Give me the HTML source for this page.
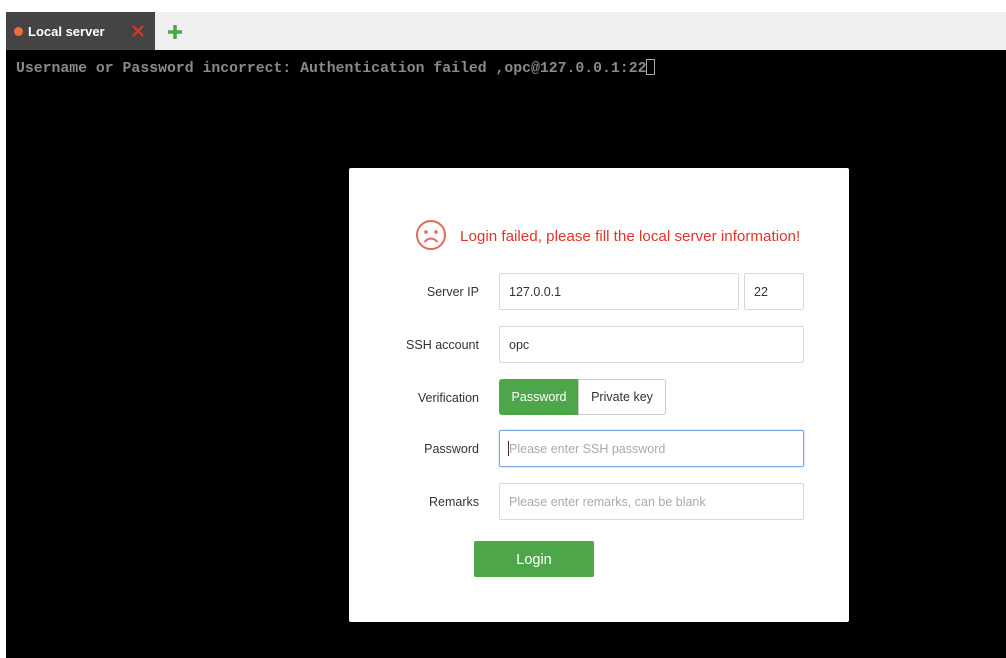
<!DOCTYPE html>
<html><head><style>
*{box-sizing:border-box;margin:0;padding:0}
body{width:1006px;height:658px;background:#fff;position:relative;overflow:hidden;font-family:"Liberation Sans",sans-serif}
.bar{position:absolute;left:6px;top:12px;width:1000px;height:38px;background:#f0f0f0}
.tab{position:absolute;left:6px;top:12px;width:149px;height:38px;background:#444;color:#fff;font-size:13px;font-weight:bold}
.dot{position:absolute;left:8px;top:15px;width:9px;height:9px;border-radius:50%;background:#f06a3a}
.term{position:absolute;left:6px;top:50px;width:1000px;height:608px;background:#000}
.tt{position:absolute;left:16px;top:59px;font-family:"Liberation Mono",monospace;font-weight:bold;font-size:14.8px;color:#8a8a8a;white-space:pre}
.cur{display:inline-block;width:9px;height:16px;border:1px solid #aaa;vertical-align:-3px}
.dlg{position:absolute;left:349px;top:168px;width:500px;height:454px;background:#fff;border-radius:2px}
.lbl{position:absolute;font-size:12.5px;color:#333;text-align:right;width:130px;left:0}
.inp{position:absolute;height:37px;border:1px solid #d9d9d9;border-radius:2px;font-size:12.5px;color:#333;padding:1px 9px 0;line-height:35px}
.ph{color:#aaa}
</style></head><body>
<div class="bar"></div>
<div class="tab"><div class="dot"></div><span style="position:absolute;left:22px;top:12px">Local server</span>
<svg style="position:absolute;left:126px;top:13px" width="12" height="12"><path d="M1 1L11 11M11 1L1 11" stroke="#e5332a" stroke-width="2"/></svg></div>
<svg style="position:absolute;left:168px;top:25px" width="14" height="14"><path d="M7 0V14M0 7H14" stroke="#4ea64b" stroke-width="3.5"/></svg>
<div class="term"></div>
<div class="tt">Username or Password incorrect: Authentication failed ,opc@127.0.0.1:22<span class="cur"></span></div>
<div class="dlg">
<svg style="position:absolute;left:66px;top:51px" width="32" height="32" viewBox="0 0 32 32"><circle cx="16" cy="16" r="14" fill="none" stroke="#e36a5a" stroke-width="2"/><circle cx="11" cy="13" r="1.8" fill="#e36a5a"/><circle cx="21" cy="13" r="1.8" fill="#e36a5a"/><path d="M9.5 23Q16 16 22.5 23" fill="none" stroke="#e36a5a" stroke-width="2"/></svg>
<div style="position:absolute;left:111px;top:60px;font-size:15.2px;color:#e5332a">Login failed, please fill the local server information!</div>
<div class="lbl" style="top:117px">Server IP</div>
<div class="inp" style="left:150px;top:105px;width:240px">127.0.0.1</div>
<div class="inp" style="left:395px;top:105px;width:60px">22</div>
<div class="lbl" style="top:170px">SSH account</div>
<div class="inp" style="left:150px;top:158px;width:305px">opc</div>
<div class="lbl" style="top:223px">Verification</div>
<div style="position:absolute;left:150px;top:211px;width:80px;height:36px;background:#4ea64b;color:#fff;font-size:12.5px;text-align:center;line-height:36px;border-radius:3px 0 0 3px">Password</div>
<div style="position:absolute;left:229px;top:211px;width:88px;height:36px;border:1px solid #ccc;color:#333;font-size:12.5px;text-align:center;line-height:34px;border-radius:0 3px 3px 0">Private key</div>
<div class="lbl" style="top:274px">Password</div>
<div class="inp ph" style="left:150px;top:262px;width:305px;border-color:#7aa7e0;box-shadow:0 0 2px #a9c6ee"><span style="display:inline-block;width:1px;height:15px;background:#333;vertical-align:-3px;margin-left:-1px"></span>Please enter SSH password</div>
<div class="lbl" style="top:327px">Remarks</div>
<div class="inp ph" style="left:150px;top:315px;width:305px">Please enter remarks, can be blank</div>
<div style="position:absolute;left:125px;top:373px;width:120px;height:36px;background:#4ea64b;color:#fff;font-size:14.5px;text-align:center;line-height:38px;border-radius:2px">Login</div>
</div>
</body></html>
